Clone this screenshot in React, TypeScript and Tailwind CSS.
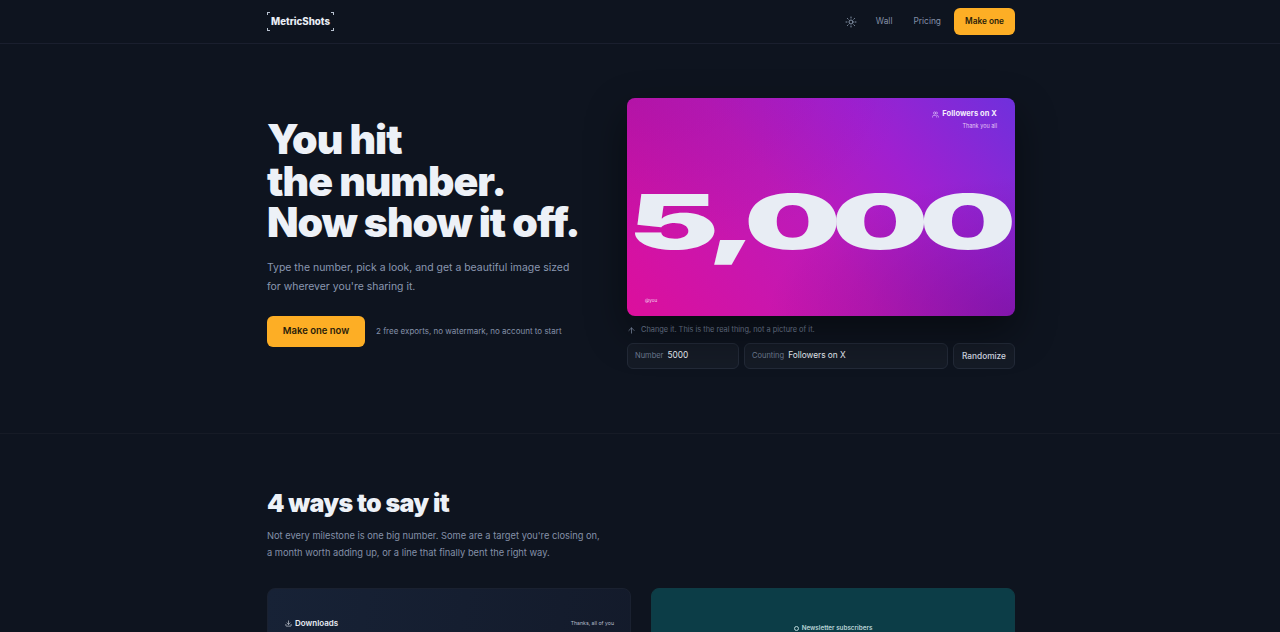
import React, { useState } from 'react';
import { ArrowUp, Download, Sun, Users } from 'lucide-react';

const BODY = "font-['Inter',sans-serif]";

// corner ticks round the wordmark
const Tick: React.FC<{ className: string }> = ({ className }) => (
  <span className={`absolute w-[3px] h-[3px] border-[#b8c2d0] ${className}`} />
);

const Logo = () => (
  <div className="relative w-[67px] pl-1 py-[3px]">
    <Tick className="left-0 top-0 border-l border-t" />
    <Tick className="right-0 top-0 border-r border-t" />
    <Tick className="left-0 bottom-0 border-l border-b" />
    <Tick className="right-0 bottom-0 border-r border-b" />
    <span className="block text-[9.7px] leading-[13px] font-extrabold text-[#e8edf4]">MetricShots</span>
  </div>
);

const Header = () => (
  <header className="h-11 border-b border-[#1a1f2e]">
    <div className="w-[748px] h-full ml-[267px] flex items-center justify-between">
      <Logo />
      <nav className="flex items-center">
        <Sun className="w-3 h-3 text-[#94a3b8] mr-[19px]" strokeWidth={1.75} />
        <a className="text-[8.4px] text-[#8490a8] mr-[21px]">Wall</a>
        <a className="text-[8.4px] text-[#8490a8] mr-[13px]">Pricing</a>
        <button className="w-[61px] h-[27px] rounded-[6px] bg-[#fdae25] text-[8.3px] font-semibold text-[#2a1d0a]">Make one</button>
      </nav>
    </div>
  </header>
);

const MilestoneCard: React.FC<{ value: string; label: string }> = ({ value, label }) => {
  const shown = Number(value).toLocaleString('en-US');
  return (
    <div className="relative h-[218px] rounded-[8px] overflow-hidden bg-[radial-gradient(ellipse_at_100%_100%,rgba(60,0,100,0.32),transparent_45%),radial-gradient(ellipse_at_0%_0%,rgba(80,0,120,0.16),transparent_50%),linear-gradient(50deg,#dc0f9c_0%,#be1ab8_45%,#a020d0_70%,#6f30dc_100%)] shadow-[0_16px_40px_rgba(0,0,0,0.45)]">
      <div className="absolute right-[18px] top-[11px] flex flex-col items-end">
        <div className="flex items-center gap-[3px]">
          <Users className="w-[7px] h-[7px] text-[#e9d5ff]" />
          <span className="text-[7.5px] leading-[10px] font-bold text-[#f4eefc] tracking-[0.01em]">{label}</span>
        </div>
        <span className="mt-[3px] text-[5.5px] leading-[8px] text-[#e4c8f4]">Thank you all</span>
      </div>
      <div className="absolute left-[1px] top-[76px] origin-left scale-x-[1.8] text-[76px] leading-[94px] font-black text-[#e8edf4] tracking-[-0.07em] whitespace-nowrap">
        {shown}
      </div>
      <span className="absolute left-[18px] bottom-[12px] text-[4.5px] leading-[6px] text-[#f3d3ee]">@you</span>
    </div>
  );
};

const Field: React.FC<{ label: string; value: string; onChange: (v: string) => void; className: string }> = ({ label, value, onChange, className }) => (
  <label className={`h-[26px] flex items-center gap-[4px] px-[7px] rounded-[6px] border border-[#232a38] bg-[#151b26] ${className}`}>
    <span className="text-[7.5px] text-[#6f7b92]">{label}</span>
    <input
      value={value}
      onChange={(e) => onChange(e.target.value)}
      className="flex-1 min-w-0 bg-transparent outline-none text-[8.3px] text-[#e8edf4] -mt-px"
    />
  </label>
);

const Hero = () => {
  const [num, setNum] = useState('5000');
  const [label, setLabel] = useState('Followers on X');
  return (
    <section className="h-[390px] border-b border-[#161b26]">
      <div className="w-[748px] ml-[267px] flex justify-between pt-[54px]">
        <div className="w-[330px] pt-[21px]">
          <h1 className="text-[41px] leading-[41.5px] font-black text-[#edf1f7] tracking-[-0.025em]">
            You hit<br />the number.<br />Now show it off.
          </h1>
          <p className="mt-[14px] w-[310px] text-[10.45px] leading-[19px] text-[#8a97b0]">
            Type the number, pick a look, and get a beautiful image sized for wherever you're sharing it.
          </p>
          <div className="mt-[20px] flex items-center gap-[11px]">
            <button className="w-[98px] h-[31px] rounded-[6px] bg-[#fdae25] text-[9.5px] font-semibold text-[#2a1d0a]">Make one now</button>
            <span className="text-[8px] text-[#8490a8]">2 free exports, no watermark, no account to start</span>
          </div>
        </div>
        <div className="w-[388px]">
          <MilestoneCard value={num} label={label} />
          <p className="mt-[9px] flex items-center gap-[5px] text-[7.4px] leading-[10px] text-[#76839b]">
            <ArrowUp className="w-[9px] h-[9px] text-[#8a97b0]" />
            Change it. This is the real thing, not a picture of it.
          </p>
          <div className="mt-[8px] flex gap-[5px]">
            <Field label="Number" value={num} onChange={setNum} className="w-[112px]" />
            <Field label="Counting" value={label} onChange={setLabel} className="flex-1" />
            <button className="w-[62px] h-[26px] rounded-[6px] border border-[#232a38] bg-[#151b26] text-[8.3px] font-medium text-[#d5dbe5]">Randomize</button>
          </div>
        </div>
      </div>
    </section>
  );
};

const Ways = () => (
  <section className="w-[748px] ml-[267px] pt-[54px]">
    <h2 className="text-[25px] leading-[30px] font-black text-[#edf1f7] tracking-[-0.025em]">4 ways to say it</h2>
    <p className="mt-[10px] text-[9.3px] leading-[16.5px] text-[#8490a8]">
      Not every milestone is one big number. Some are a target you're closing on,<br />
      a month worth adding up, or a line that finally bent the right way.
    </p>
    <div className="mt-[27px] grid grid-cols-2 gap-[20px]">
      <div className="relative h-[200px] rounded-[8px] border border-[#1a2130] bg-[linear-gradient(100deg,#172236,#131a2a)] pl-[17px] pr-[16px] pt-[28px]">
        <div className="flex items-center justify-between">
          <span className="flex items-center gap-[3px] text-[8px] font-semibold text-[#e8edf4]">
            <Download className="w-[7px] h-[7px]" />
            Downloads
          </span>
          <span className="text-[5.2px] text-[#b4bdcb] mt-[2px]">Thanks, all of you</span>
        </div>
      </div>
      <div className="relative h-[200px] rounded-[8px] border border-[#0f3c45] bg-[#0c3d47] pt-[35px]">
        <div className="flex items-center justify-center gap-[3px] text-[6.3px] font-semibold text-[#b9d4d6]">
          <span className="w-[5px] h-[5px] rounded-full border border-[#b9d4d6]" />
          Newsletter subscribers
        </div>
      </div>
    </div>
  </section>
);

export default function App() {
  return (
    <div className={`h-screen overflow-hidden bg-[#0e141f] ${BODY}`}>
      <Header />
      <Hero />
      <Ways />
    </div>
  );
}
